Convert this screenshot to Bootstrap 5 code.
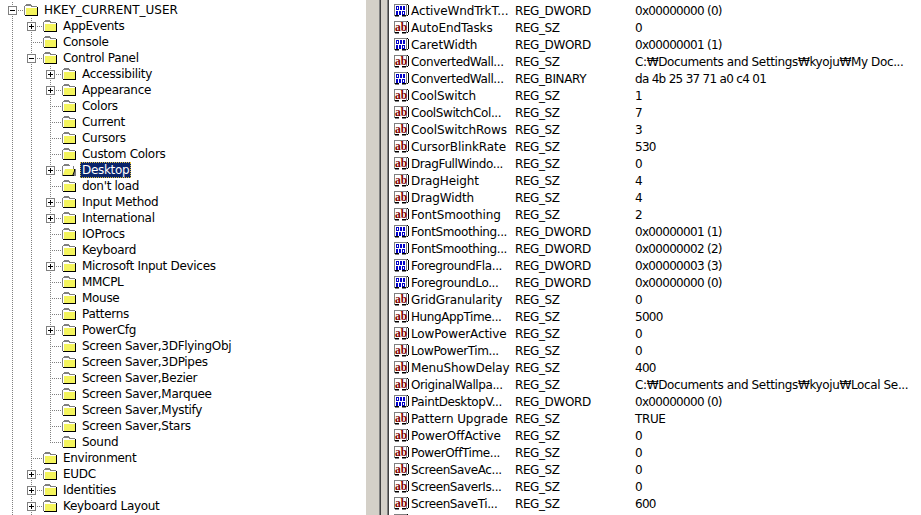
<!DOCTYPE html>
<html lang="ko"><head><meta charset="utf-8"><title>Registry</title>
<link rel="stylesheet" href="https://cdn.jsdelivr.net/npm/bootstrap@5.3.0/dist/css/bootstrap.min.css">
<style>
html,body{height:515px;overflow:hidden;background:#fff}
body{font:12px/16px "DejaVu Sans",sans-serif;color:#000}
.regedit{height:515px}
.treepane{width:366px;padding-top:2px}
.trow{height:16px;padding-left:3px;white-space:nowrap}
.gv,.gj,.ge{display:block;flex:0 0 19px;width:19px;height:16px;position:relative;background-repeat:no-repeat}
.gv,.gj{background-image:repeating-linear-gradient(to bottom,#808080 0 1px,transparent 1px 2px);background-size:1px 16px;background-position:9px 0}
.ge{background-image:repeating-linear-gradient(to bottom,#808080 0 1px,transparent 1px 2px);background-size:1px 8px;background-position:9px 0}
.gj::after,.ge::after{content:"";position:absolute;left:9px;top:8px;width:11px;height:1px;background:repeating-linear-gradient(to right,#808080 0 1px,transparent 1px 2px)}
.xp{position:absolute;left:5px;top:4px;width:9px;height:9px;z-index:1}
.fld{flex:0 0 14px;width:14px;height:12px;margin-left:2px}
.tlb{margin-left:6px;letter-spacing:-.3px}
.tcap{letter-spacing:0}
.tsel{margin-left:4px;padding:0 2px;background:#0a246a;color:#fff;outline:1px dotted #e0c040;outline-offset:-1px;letter-spacing:-.3px}
.splitter{width:23px;flex:0 0 23px;background:#d4d0c8;position:relative}
.splitter::before{content:"";position:absolute;left:13px;top:0;bottom:0;width:2px;background:linear-gradient(to right,#808080 50%,#404040 50%)}
.splitter::after{content:"";position:absolute;right:0;top:0;bottom:0;width:2px;background:linear-gradient(to right,#808080 50%,#404040 50%)}
.listpane{margin-top:-15px;padding-left:4px}
.lrow{height:17px;white-space:nowrap}
.lname{width:122px;flex:0 0 122px;overflow:hidden;letter-spacing:-.1px}
.lcut{letter-spacing:-.4px}
.ltype{width:120px;flex:0 0 120px;letter-spacing:-.4px}
.ldata{letter-spacing:-.37px}
.lnum{letter-spacing:-.7px}
.rico{flex:0 0 17px;width:17px;height:14px;margin-right:1px}
.defs{position:absolute;width:0;height:0}
</style></head><body>
<svg class="defs" aria-hidden="true" shape-rendering="crispEdges">
<defs>
<symbol id="ic-plus" viewBox="0 0 9 9"><rect x=".5" y=".5" width="8" height="8" fill="#fff" stroke="#808080"/><rect x="2" y="4" width="5" height="1" fill="#000"/><rect x="4" y="2" width="1" height="5" fill="#000"/></symbol>
<symbol id="ic-minus" viewBox="0 0 9 9"><rect x=".5" y=".5" width="8" height="8" fill="#fff" stroke="#808080"/><rect x="2" y="4" width="5" height="1" fill="#000"/></symbol>
<symbol id="ic-folder" viewBox="0 0 14 12"><path d="M0 2h1V1h1V0h5v1h1v1h5v9H0z" fill="#808080"/><rect x="1" y="2" width="6" height="1" fill="#fff"/><rect x="1" y="3" width="12" height="8" fill="#fff"/><rect x="2" y="4" width="11" height="7" fill="#f4f45c"/><rect x="13" y="3" width="1" height="9" fill="#000"/><rect x="1" y="11" width="13" height="1" fill="#000"/></symbol>
<symbol id="ic-open" viewBox="0 0 14 12"><path d="M0 2h1V1h1V0h5v1h1v1h4v3h2v7H0z" fill="#808080"/><rect x="1" y="2" width="10" height="9" fill="#fff"/><path d="M3 5h10l-2 6H1z" fill="#f4f45c"/><path d="M13 5v2l-2 5h-1l2-5V5z" fill="#000"/><rect x="1" y="11" width="11" height="1" fill="#000"/></symbol>
<symbol id="ic-ab" viewBox="0 0 17 14"><path d="M1 0h13v12h-1v1h-4v-1H6v1H2v-1H1z" fill="#808080"/><rect x="2" y="1" width="11" height="11" fill="#fff"/><path d="M2 12h4v-1h3v1h4v-1H2z" fill="#000"/><rect x="15" y="1" width="1" height="10" fill="#000"/><rect x="14" y="0" width="1" height="1" fill="#000"/><rect x="14" y="11" width="1" height="1" fill="#000"/><text x="2" y="9.5" font-family="Liberation Serif" font-weight="700" font-size="11.5" fill="#800000" shape-rendering="auto">ab</text></symbol>
<symbol id="ic-bin" viewBox="0 0 17 14"><path d="M1 0h13v12h-1v1h-4v-1H6v1H2v-1H1z" fill="#808080"/><rect x="2" y="1" width="11" height="11" fill="#fff"/><path d="M2 12h4v-1h3v1h4v-1H2z" fill="#000"/><rect x="15" y="1" width="1" height="10" fill="#000"/><rect x="14" y="0" width="1" height="1" fill="#000"/><rect x="14" y="11" width="1" height="1" fill="#000"/><path d="M3 2h3v4H3zM7 2h2v4H7zM10 2h2v4h-2zM3 7h2v4H3zM6 7h2v4H6zM9 7h3v4H9z" fill="#0000c8"/><path d="M4 3h1v2H4zM10 8h1v2h-1z" fill="#fff"/></symbol>
</defs></svg>
<main class="regedit d-flex overflow-hidden">
<section class="treepane overflow-hidden">
<div class="trow d-flex align-items-center"><i class="gj"><svg class="xp"><use href="#ic-minus"/></svg></i><svg class="fld"><use href="#ic-folder"/></svg><span class="tlb tcap">HKEY_CURRENT_USER</span></div>
<div class="trow d-flex align-items-center"><i class="gv"></i><i class="gj"><svg class="xp"><use href="#ic-plus"/></svg></i><svg class="fld"><use href="#ic-folder"/></svg><span class="tlb">AppEvents</span></div>
<div class="trow d-flex align-items-center"><i class="gv"></i><i class="gj"></i><svg class="fld"><use href="#ic-folder"/></svg><span class="tlb">Console</span></div>
<div class="trow d-flex align-items-center"><i class="gv"></i><i class="gj"><svg class="xp"><use href="#ic-minus"/></svg></i><svg class="fld"><use href="#ic-folder"/></svg><span class="tlb">Control Panel</span></div>
<div class="trow d-flex align-items-center"><i class="gv"></i><i class="gv"></i><i class="gj"><svg class="xp"><use href="#ic-plus"/></svg></i><svg class="fld"><use href="#ic-folder"/></svg><span class="tlb">Accessibility</span></div>
<div class="trow d-flex align-items-center"><i class="gv"></i><i class="gv"></i><i class="gj"><svg class="xp"><use href="#ic-plus"/></svg></i><svg class="fld"><use href="#ic-folder"/></svg><span class="tlb">Appearance</span></div>
<div class="trow d-flex align-items-center"><i class="gv"></i><i class="gv"></i><i class="gj"></i><svg class="fld"><use href="#ic-folder"/></svg><span class="tlb">Colors</span></div>
<div class="trow d-flex align-items-center"><i class="gv"></i><i class="gv"></i><i class="gj"></i><svg class="fld"><use href="#ic-folder"/></svg><span class="tlb">Current</span></div>
<div class="trow d-flex align-items-center"><i class="gv"></i><i class="gv"></i><i class="gj"></i><svg class="fld"><use href="#ic-folder"/></svg><span class="tlb">Cursors</span></div>
<div class="trow d-flex align-items-center"><i class="gv"></i><i class="gv"></i><i class="gj"></i><svg class="fld"><use href="#ic-folder"/></svg><span class="tlb">Custom Colors</span></div>
<div class="trow d-flex align-items-center"><i class="gv"></i><i class="gv"></i><i class="gj"><svg class="xp"><use href="#ic-plus"/></svg></i><svg class="fld"><use href="#ic-open"/></svg><span class="tsel">Desktop</span></div>
<div class="trow d-flex align-items-center"><i class="gv"></i><i class="gv"></i><i class="gj"></i><svg class="fld"><use href="#ic-folder"/></svg><span class="tlb">don't load</span></div>
<div class="trow d-flex align-items-center"><i class="gv"></i><i class="gv"></i><i class="gj"><svg class="xp"><use href="#ic-plus"/></svg></i><svg class="fld"><use href="#ic-folder"/></svg><span class="tlb">Input Method</span></div>
<div class="trow d-flex align-items-center"><i class="gv"></i><i class="gv"></i><i class="gj"><svg class="xp"><use href="#ic-plus"/></svg></i><svg class="fld"><use href="#ic-folder"/></svg><span class="tlb">International</span></div>
<div class="trow d-flex align-items-center"><i class="gv"></i><i class="gv"></i><i class="gj"></i><svg class="fld"><use href="#ic-folder"/></svg><span class="tlb">IOProcs</span></div>
<div class="trow d-flex align-items-center"><i class="gv"></i><i class="gv"></i><i class="gj"></i><svg class="fld"><use href="#ic-folder"/></svg><span class="tlb">Keyboard</span></div>
<div class="trow d-flex align-items-center"><i class="gv"></i><i class="gv"></i><i class="gj"><svg class="xp"><use href="#ic-plus"/></svg></i><svg class="fld"><use href="#ic-folder"/></svg><span class="tlb">Microsoft Input Devices</span></div>
<div class="trow d-flex align-items-center"><i class="gv"></i><i class="gv"></i><i class="gj"></i><svg class="fld"><use href="#ic-folder"/></svg><span class="tlb">MMCPL</span></div>
<div class="trow d-flex align-items-center"><i class="gv"></i><i class="gv"></i><i class="gj"></i><svg class="fld"><use href="#ic-folder"/></svg><span class="tlb">Mouse</span></div>
<div class="trow d-flex align-items-center"><i class="gv"></i><i class="gv"></i><i class="gj"></i><svg class="fld"><use href="#ic-folder"/></svg><span class="tlb">Patterns</span></div>
<div class="trow d-flex align-items-center"><i class="gv"></i><i class="gv"></i><i class="gj"><svg class="xp"><use href="#ic-plus"/></svg></i><svg class="fld"><use href="#ic-folder"/></svg><span class="tlb">PowerCfg</span></div>
<div class="trow d-flex align-items-center"><i class="gv"></i><i class="gv"></i><i class="gj"></i><svg class="fld"><use href="#ic-folder"/></svg><span class="tlb">Screen Saver,3DFlyingObj</span></div>
<div class="trow d-flex align-items-center"><i class="gv"></i><i class="gv"></i><i class="gj"></i><svg class="fld"><use href="#ic-folder"/></svg><span class="tlb">Screen Saver,3DPipes</span></div>
<div class="trow d-flex align-items-center"><i class="gv"></i><i class="gv"></i><i class="gj"></i><svg class="fld"><use href="#ic-folder"/></svg><span class="tlb">Screen Saver,Bezier</span></div>
<div class="trow d-flex align-items-center"><i class="gv"></i><i class="gv"></i><i class="gj"></i><svg class="fld"><use href="#ic-folder"/></svg><span class="tlb">Screen Saver,Marquee</span></div>
<div class="trow d-flex align-items-center"><i class="gv"></i><i class="gv"></i><i class="gj"></i><svg class="fld"><use href="#ic-folder"/></svg><span class="tlb">Screen Saver,Mystify</span></div>
<div class="trow d-flex align-items-center"><i class="gv"></i><i class="gv"></i><i class="gj"></i><svg class="fld"><use href="#ic-folder"/></svg><span class="tlb">Screen Saver,Stars</span></div>
<div class="trow d-flex align-items-center"><i class="gv"></i><i class="gv"></i><i class="ge"></i><svg class="fld"><use href="#ic-folder"/></svg><span class="tlb">Sound</span></div>
<div class="trow d-flex align-items-center"><i class="gv"></i><i class="gj"></i><svg class="fld"><use href="#ic-folder"/></svg><span class="tlb">Environment</span></div>
<div class="trow d-flex align-items-center"><i class="gv"></i><i class="gj"><svg class="xp"><use href="#ic-plus"/></svg></i><svg class="fld"><use href="#ic-folder"/></svg><span class="tlb">EUDC</span></div>
<div class="trow d-flex align-items-center"><i class="gv"></i><i class="gj"><svg class="xp"><use href="#ic-plus"/></svg></i><svg class="fld"><use href="#ic-folder"/></svg><span class="tlb">Identities</span></div>
<div class="trow d-flex align-items-center"><i class="gv"></i><i class="gj"><svg class="xp"><use href="#ic-plus"/></svg></i><svg class="fld"><use href="#ic-folder"/></svg><span class="tlb">Keyboard Layout</span></div>
<div class="trow d-flex align-items-center"><i class="gv"></i><i class="gv"></i></div>
</section>
<div class="splitter"></div>
<section class="listpane flex-grow-1 overflow-hidden">
<div class="lrow d-flex align-items-center"><div class="lname d-flex align-items-center"><svg class="rico"><use href="#ic-bin"/></svg></div></div>
<div class="lrow d-flex align-items-center"><div class="lname d-flex align-items-center"><svg class="rico"><use href="#ic-bin"/></svg><span>ActiveWndTrkT...</span></div><div class="ltype">REG_DWORD</div><div class="ldata lnum">0x00000000 (0)</div></div>
<div class="lrow d-flex align-items-center"><div class="lname d-flex align-items-center"><svg class="rico"><use href="#ic-ab"/></svg><span>AutoEndTasks</span></div><div class="ltype">REG_SZ</div><div class="ldata lnum">0</div></div>
<div class="lrow d-flex align-items-center"><div class="lname d-flex align-items-center"><svg class="rico"><use href="#ic-bin"/></svg><span>CaretWidth</span></div><div class="ltype">REG_DWORD</div><div class="ldata lnum">0x00000001 (1)</div></div>
<div class="lrow d-flex align-items-center"><div class="lname d-flex align-items-center"><svg class="rico"><use href="#ic-ab"/></svg><span class="lcut">ConvertedWall...</span></div><div class="ltype">REG_SZ</div><div class="ldata">C:₩Documents and Settings₩kyoju₩My Doc...</div></div>
<div class="lrow d-flex align-items-center"><div class="lname d-flex align-items-center"><svg class="rico"><use href="#ic-bin"/></svg><span class="lcut">ConvertedWall...</span></div><div class="ltype">REG_BINARY</div><div class="ldata lnum">da 4b 25 37 71 a0 c4 01</div></div>
<div class="lrow d-flex align-items-center"><div class="lname d-flex align-items-center"><svg class="rico"><use href="#ic-ab"/></svg><span>CoolSwitch</span></div><div class="ltype">REG_SZ</div><div class="ldata lnum">1</div></div>
<div class="lrow d-flex align-items-center"><div class="lname d-flex align-items-center"><svg class="rico"><use href="#ic-ab"/></svg><span class="lcut">CoolSwitchCol...</span></div><div class="ltype">REG_SZ</div><div class="ldata lnum">7</div></div>
<div class="lrow d-flex align-items-center"><div class="lname d-flex align-items-center"><svg class="rico"><use href="#ic-ab"/></svg><span>CoolSwitchRows</span></div><div class="ltype">REG_SZ</div><div class="ldata lnum">3</div></div>
<div class="lrow d-flex align-items-center"><div class="lname d-flex align-items-center"><svg class="rico"><use href="#ic-ab"/></svg><span>CursorBlinkRate</span></div><div class="ltype">REG_SZ</div><div class="ldata lnum">530</div></div>
<div class="lrow d-flex align-items-center"><div class="lname d-flex align-items-center"><svg class="rico"><use href="#ic-ab"/></svg><span class="lcut">DragFullWindo...</span></div><div class="ltype">REG_SZ</div><div class="ldata lnum">0</div></div>
<div class="lrow d-flex align-items-center"><div class="lname d-flex align-items-center"><svg class="rico"><use href="#ic-ab"/></svg><span>DragHeight</span></div><div class="ltype">REG_SZ</div><div class="ldata lnum">4</div></div>
<div class="lrow d-flex align-items-center"><div class="lname d-flex align-items-center"><svg class="rico"><use href="#ic-ab"/></svg><span>DragWidth</span></div><div class="ltype">REG_SZ</div><div class="ldata lnum">4</div></div>
<div class="lrow d-flex align-items-center"><div class="lname d-flex align-items-center"><svg class="rico"><use href="#ic-ab"/></svg><span>FontSmoothing</span></div><div class="ltype">REG_SZ</div><div class="ldata lnum">2</div></div>
<div class="lrow d-flex align-items-center"><div class="lname d-flex align-items-center"><svg class="rico"><use href="#ic-bin"/></svg><span class="lcut">FontSmoothing...</span></div><div class="ltype">REG_DWORD</div><div class="ldata lnum">0x00000001 (1)</div></div>
<div class="lrow d-flex align-items-center"><div class="lname d-flex align-items-center"><svg class="rico"><use href="#ic-bin"/></svg><span class="lcut">FontSmoothing...</span></div><div class="ltype">REG_DWORD</div><div class="ldata lnum">0x00000002 (2)</div></div>
<div class="lrow d-flex align-items-center"><div class="lname d-flex align-items-center"><svg class="rico"><use href="#ic-bin"/></svg><span class="lcut">ForegroundFla...</span></div><div class="ltype">REG_DWORD</div><div class="ldata lnum">0x00000003 (3)</div></div>
<div class="lrow d-flex align-items-center"><div class="lname d-flex align-items-center"><svg class="rico"><use href="#ic-bin"/></svg><span class="lcut">ForegroundLo...</span></div><div class="ltype">REG_DWORD</div><div class="ldata lnum">0x00000000 (0)</div></div>
<div class="lrow d-flex align-items-center"><div class="lname d-flex align-items-center"><svg class="rico"><use href="#ic-ab"/></svg><span>GridGranularity</span></div><div class="ltype">REG_SZ</div><div class="ldata lnum">0</div></div>
<div class="lrow d-flex align-items-center"><div class="lname d-flex align-items-center"><svg class="rico"><use href="#ic-ab"/></svg><span class="lcut">HungAppTime...</span></div><div class="ltype">REG_SZ</div><div class="ldata lnum">5000</div></div>
<div class="lrow d-flex align-items-center"><div class="lname d-flex align-items-center"><svg class="rico"><use href="#ic-ab"/></svg><span>LowPowerActive</span></div><div class="ltype">REG_SZ</div><div class="ldata lnum">0</div></div>
<div class="lrow d-flex align-items-center"><div class="lname d-flex align-items-center"><svg class="rico"><use href="#ic-ab"/></svg><span class="lcut">LowPowerTim...</span></div><div class="ltype">REG_SZ</div><div class="ldata lnum">0</div></div>
<div class="lrow d-flex align-items-center"><div class="lname d-flex align-items-center"><svg class="rico"><use href="#ic-ab"/></svg><span>MenuShowDelay</span></div><div class="ltype">REG_SZ</div><div class="ldata lnum">400</div></div>
<div class="lrow d-flex align-items-center"><div class="lname d-flex align-items-center"><svg class="rico"><use href="#ic-ab"/></svg><span class="lcut">OriginalWallpa...</span></div><div class="ltype">REG_SZ</div><div class="ldata">C:₩Documents and Settings₩kyoju₩Local Se...</div></div>
<div class="lrow d-flex align-items-center"><div class="lname d-flex align-items-center"><svg class="rico"><use href="#ic-bin"/></svg><span class="lcut">PaintDesktopV...</span></div><div class="ltype">REG_DWORD</div><div class="ldata lnum">0x00000000 (0)</div></div>
<div class="lrow d-flex align-items-center"><div class="lname d-flex align-items-center"><svg class="rico"><use href="#ic-ab"/></svg><span>Pattern Upgrade</span></div><div class="ltype">REG_SZ</div><div class="ldata">TRUE</div></div>
<div class="lrow d-flex align-items-center"><div class="lname d-flex align-items-center"><svg class="rico"><use href="#ic-ab"/></svg><span>PowerOffActive</span></div><div class="ltype">REG_SZ</div><div class="ldata lnum">0</div></div>
<div class="lrow d-flex align-items-center"><div class="lname d-flex align-items-center"><svg class="rico"><use href="#ic-ab"/></svg><span class="lcut">PowerOffTime...</span></div><div class="ltype">REG_SZ</div><div class="ldata lnum">0</div></div>
<div class="lrow d-flex align-items-center"><div class="lname d-flex align-items-center"><svg class="rico"><use href="#ic-ab"/></svg><span class="lcut">ScreenSaveAc...</span></div><div class="ltype">REG_SZ</div><div class="ldata lnum">0</div></div>
<div class="lrow d-flex align-items-center"><div class="lname d-flex align-items-center"><svg class="rico"><use href="#ic-ab"/></svg><span class="lcut">ScreenSaverIs...</span></div><div class="ltype">REG_SZ</div><div class="ldata lnum">0</div></div>
<div class="lrow d-flex align-items-center"><div class="lname d-flex align-items-center"><svg class="rico"><use href="#ic-ab"/></svg><span class="lcut">ScreenSaveTi...</span></div><div class="ltype">REG_SZ</div><div class="ldata lnum">600</div></div>
<div class="lrow d-flex align-items-center"><div class="lname d-flex align-items-center"><svg class="rico"><use href="#ic-ab"/></svg></div></div>
</section>
</main>
</body></html>
